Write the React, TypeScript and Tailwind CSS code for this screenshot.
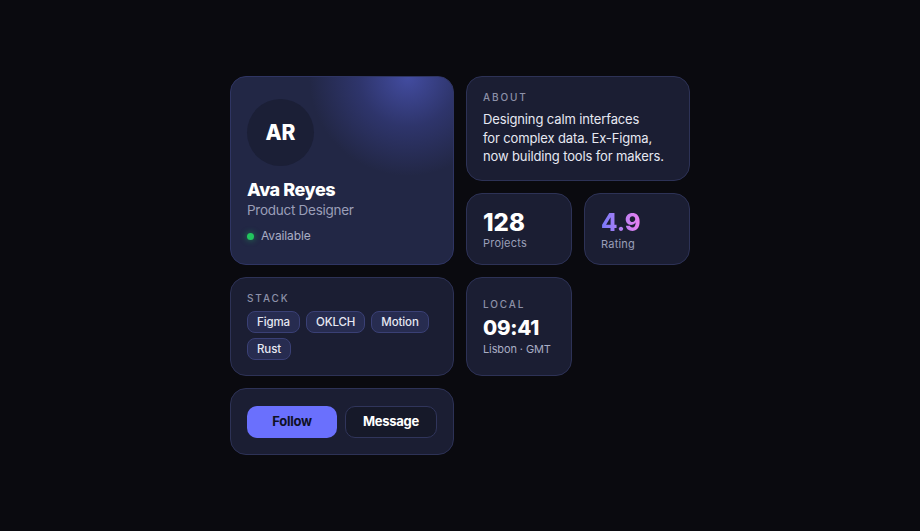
import React from 'react';

const font = { fontFamily: 'Inter, "Noto Sans", sans-serif' };

function Label({ children }: { children: React.ReactNode }) {
	return (
		<div className="text-[10px] leading-[12px] font-medium tracking-[0.19em] text-[#8d91a8] uppercase">
			{children}
		</div>
	);
}

const card = 'rounded-2xl border border-[#2d3256] bg-[#1b1e33]';

export default function App() {
	const stack = ['Figma', 'OKLCH', 'Motion', 'Rust'];

	return (
		<main
			className="min-h-screen w-full bg-[#0a0a0f] flex items-center justify-center"
			style={font}
		>
			<div className="grid grid-cols-[repeat(4,106px)] grid-rows-[105px_72px_99px_67px] gap-3">
				{/* Profile */}
				<section className="relative col-span-2 row-span-2 overflow-hidden rounded-2xl border border-[#2f3563] bg-[#222745] px-4 pt-[22px]">
					<div className="pointer-events-none absolute -top-[100px] -right-[55px] h-[200px] w-[200px] rounded-full bg-[radial-gradient(circle,rgba(70,80,170,0.9)_0%,rgba(58,66,145,0.5)_35%,rgba(34,39,69,0)_70%)]" />
					<div className="relative">
						<div className="flex h-[67px] w-[67px] items-center justify-center rounded-full bg-[#1b1f36] text-[21px] font-extrabold text-white">
							AR
						</div>
						<h1 className="mt-[13px] text-[18px] leading-[22px] font-extrabold tracking-[-0.025em] text-white">
							Ava Reyes
						</h1>
						<p className="text-[13.5px] leading-[18px] tracking-[-0.02em] text-[#9a9eb8]">Product Designer</p>
						<div className="mt-[9px] flex items-center gap-[7px]">
							<span className="h-[7px] w-[7px] rounded-full bg-[#22c55e] shadow-[0_0_6px_rgba(34,197,94,0.6)]" />
							<span className="text-[12px] leading-[16px] tracking-[-0.01em] text-[#a9adc4]">Available</span>
						</div>
					</div>
				</section>

				{/* About */}
				<section className={`col-span-2 ${card} px-4 pt-[14px]`}>
					<Label>About</Label>
					<p className="mt-[7px] text-[13px] leading-[18.5px] tracking-[-0.01em] text-[#e6e8f2]">
						Designing calm interfaces
						<br />
						for complex data. Ex-Figma,
						<br />
						now building tools for makers.
					</p>
				</section>

				{/* Stats */}
				<section className={`${card} px-4 pt-[16px]`}>
					<div className="text-[24px] leading-[26px] font-extrabold text-white">128</div>
					<div className="text-[11px] leading-[14px] tracking-[0.02em] text-[#9a9eb8]">Projects</div>
				</section>
				<section className={`${card} px-4 pt-[16px]`}>
					<div className="inline-block bg-gradient-to-r from-[#7478f8] to-[#ec80f0] bg-clip-text text-[24px] leading-[26px] font-extrabold text-transparent">
						4.9
					</div>
					<div className="text-[11px] leading-[14px] tracking-[0.02em] text-[#9a9eb8]">Rating</div>
				</section>

				{/* Stack */}
				<section className={`col-span-2 ${card} px-4 pt-[14px]`}>
					<Label>Stack</Label>
					<div className="mt-[7px] flex flex-wrap gap-x-[6px] gap-y-[5px]">
						{stack.map((s) => (
							<span
								key={s}
								className="rounded-lg border border-[#3a4075] bg-[#272c50] px-[9px] py-[3px] text-[11.5px] leading-[14px] font-medium tracking-[-0.01em] text-[#e6e8f2]"
							>
								{s}
							</span>
						))}
					</div>
				</section>

				{/* Local */}
				<section className={`${card} px-4 pt-[20px]`}>
					<Label>Local</Label>
					<div className="mt-[6px] text-[20.5px] leading-[24px] font-extrabold tracking-[-0.01em] text-white">09:41</div>
					<div className="mt-[2px] whitespace-nowrap text-[11px] leading-[14px] tracking-[-0.01em] text-[#a9adc4]">
						Lisbon · GMT
					</div>
				</section>
				<div />

				{/* Actions */}
				<section className={`col-span-2 ${card} flex items-center gap-2 px-4`}>
					<button className="h-8 flex-1 rounded-[10px] bg-[#6a70fd] text-[13px] font-bold tracking-[-0.02em] text-[#0f1124]">
						Follow
					</button>
					<button className="h-8 flex-1 rounded-[10px] border border-[#30355b] bg-[#161929] text-[13px] font-bold tracking-[-0.02em] text-white">
						Message
					</button>
				</section>
			</div>
		</main>
	);
}
